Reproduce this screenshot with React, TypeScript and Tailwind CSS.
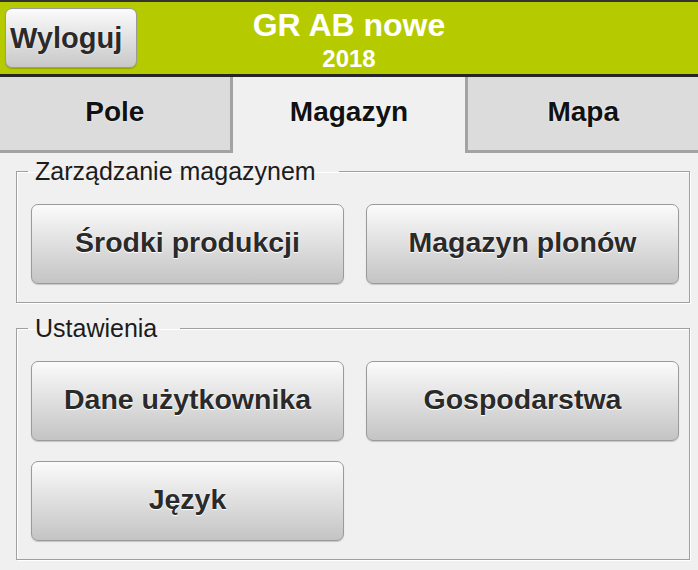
import React from 'react';

const FONT = "font-['Liberation_Sans',Arial,sans-serif]";

const TABS = [
  { label: 'Pole', active: false },
  { label: 'Magazyn', active: true },
  { label: 'Mapa', active: false },
];

function GrayButton({ label }: { label: string }) {
  return (
    <button className="flex h-[80px] items-center justify-center rounded-[7px] border border-[#9a9a9a] bg-linear-to-b from-[#fbfbfb] to-[#c4c4c4] pb-[3px] shadow-[0_1px_1px_rgba(0,0,0,0.18)]">
      <span className="text-[28.5px] font-bold leading-none text-[#2a2a2a] [text-shadow:0_0_2px_#fff,0_1px_0_#fff]">
        {label}
      </span>
    </button>
  );
}

function Group({ title, items, className }: { title: string; items: string[]; className: string }) {
  return (
    <fieldset
      className={`ml-[16px] mr-[8px] min-w-0 border border-[#a0a0a0] p-0 shadow-[inset_1px_1px_0_#fff,1px_1px_0_#fff] ${className}`}
    >
      <legend className="ml-[11px] pl-[7px] pr-[23px] text-[25px] leading-none text-[#1c1c1c]">{title}</legend>
      <div className="grid grid-cols-2 gap-x-[22px] gap-y-[20px] pl-[14px] pr-[10px] pt-[20px] pb-[18px]">
        {items.map((item) => (
          <GrayButton key={item} label={item} />
        ))}
      </div>
    </fieldset>
  );
}

export default function App() {
  return (
    <div className={`${FONT} h-[570px] w-[698px] overflow-hidden bg-[#f0f0f0]`}>
      <header className="grid h-[77px] grid-cols-[1fr_auto_1fr] border-t-2 border-b-[3px] border-t-[#333] border-b-[#262626] bg-[#b5cb00]">
        <div>
          <button className="ml-[5px] mt-[6px] flex h-[60px] w-[132px] items-center rounded-[7px] border border-[#9a9a9a] bg-linear-to-b from-[#fbfbfb] to-[#c8c8c8] pl-[4px] shadow-[0_1px_1px_rgba(0,0,0,0.2)]">
            <span className="text-[29px] font-bold leading-none text-[#2a2a2a] [text-shadow:0_0_2px_#fff]">
              Wyloguj
            </span>
          </button>
        </div>
        <div className="flex flex-col items-center pt-[7px] text-white">
          <span className="text-[32px] font-bold leading-none">GR AB nowe</span>
          <span className="mt-[6px] text-[24px] font-bold leading-none">2018</span>
        </div>
        <div />
      </header>

      <nav className="grid h-[76px] grid-cols-3">
        {TABS.map((tab, i) => (
          <div
            key={tab.label}
            className={
              tab.active
                ? 'flex items-start justify-center bg-[#f0f0f0] pt-[21px]'
                : `flex items-start justify-center border-b-[3px] border-[#a3a3a3] bg-[#dcdcdc] pt-[21px] ${
                    i === 0 ? 'border-r-[3px]' : 'border-l-[3px]'
                  }`
            }
          >
            <span className="text-[28px] font-bold leading-none text-[#111] [text-shadow:0_0_2px_#fff]">
              {tab.label}
            </span>
          </div>
        ))}
      </nav>

      <Group title="Zarządzanie magazynem" items={['Środki produkcji', 'Magazyn plonów']} className="mt-[6px]" />
      <Group
        title="Ustawienia"
        items={['Dane użytkownika', 'Gospodarstwa', 'Język']}
        className="mt-[13px]"
      />
    </div>
  );
}
